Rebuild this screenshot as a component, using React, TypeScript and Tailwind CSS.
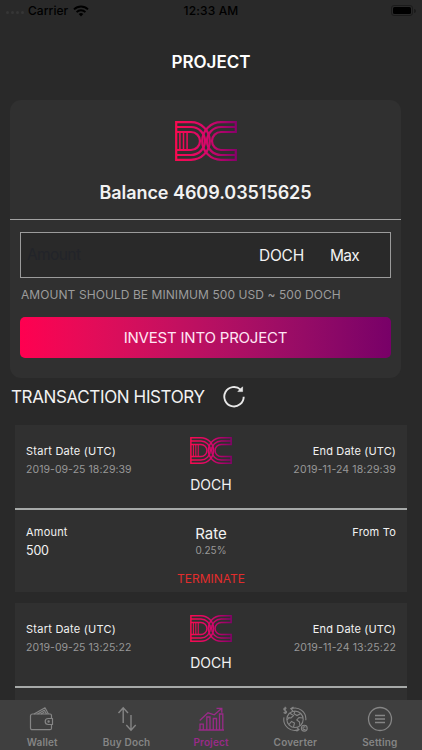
import React from 'react';

interface IHistory {
  id: number;
  start: string;
  end: string;
  amount?: string;
  rate?: string;
}

const HISTORY: IHistory[] = [
  { id: 1, start: '2019-09-25 18:29:39', end: '2019-11-24 18:29:39', amount: '500', rate: '0.25%' },
  { id: 2, start: '2019-09-25 13:25:22', end: '2019-11-24 13:25:22' },
];

interface ILogoProps {
  id: string;
  className: string;
}

const Logo: React.FC<ILogoProps> = ({ id, className }) => (
  <svg viewBox="0 0 62 40" className={className} fill="none" stroke={`url(#${id})`} strokeWidth="2.2">
    <defs>
      <linearGradient id={id} gradientUnits="userSpaceOnUse" x1="0" y1="0" x2="62" y2="0">
        <stop offset="0" stopColor="#fa0a50" />
        <stop offset=".5" stopColor="#d8086a" />
        <stop offset="1" stopColor="#86006a" />
      </linearGradient>
    </defs>
    <path d="M1.2 1.2H16A18.8 18.8 0 0 1 16 38.8H1.2Z" />
    <path d="M1 6H16A14 14 0 0 1 16 34H1" />
    <path d="M1 11H16A9 9 0 0 1 16 29H1" />
    <path d="M4.9 11V29M8.5 11V29M12.1 11V29" strokeWidth="1.5" />
    <path d="M60.8 1.2H46A18.8 18.8 0 0 0 46 38.8H60.8V29H46A9 9 0 0 1 46 11H60.8Z" />
    <path d="M61 6H46A14 14 0 0 0 46 34H61" />
  </svg>
);

const StatusBar: React.FC = () => (
  <div className="flex h-5 shrink-0 items-center justify-between pl-[6px] pr-[6px] pt-px text-[12px] font-medium text-black">
    <div className="flex w-32 items-center">
      <div className="mr-1 mt-1 flex gap-[2px]">
        <span className="size-[3px] rounded-full bg-[#363636]" />
        <span className="size-[3px] rounded-full bg-[#363636]" />
        <span className="size-[3px] rounded-full bg-[#363636]" />
        <span className="size-[3px] rounded-full bg-[#363636]" />
      </div>
      <span className="tracking-[0.05px]">Carrier</span>
      <svg viewBox="0 0 16 12" className="ml-[5px] h-3 w-4" fill="none" stroke="#000" strokeWidth="2">
        <path d="M1 4.4a10 10 0 0 1 14 0M3.6 7.1a6.3 6.3 0 0 1 8.8 0" />
        <path d="M5.7 9.1a3.3 3.3 0 0 1 4.6 0L8 11.5Z" fill="#000" stroke="none" />
      </svg>
    </div>
    <span className="tracking-[0.15px]">12:33 AM</span>
    <div className="flex w-32 items-center justify-end gap-px">
      <div className="h-[11px] w-[22px] rounded-[3px] border border-[#1b1b1b] p-px">
        <div className="h-full rounded-[1.5px] bg-black" />
      </div>
      <span className="h-1 w-[1.5px] rounded-r bg-[#1b1b1b]" />
    </div>
  </div>
);

const InvestCard: React.FC = () => (
  <section className="ml-[10px] mt-[26px] h-[278px] w-[391px] shrink-0 rounded-[11px] bg-[#303030]">
    <div className="flex h-[120px] flex-col items-center border-b border-[#a2a2a2] pt-[21px]">
      <Logo id="logo-main" className="h-10 w-[62px]" />
      <p className="mt-[18px] text-[18px] leading-7 font-semibold tracking-[-0.05px]">Balance 4609.03515625</p>
    </div>
    <div className="px-[10px] pt-3">
      <div className="flex h-[46px] items-center border border-[#9b9b9b] bg-[#292929] pl-[6px] pr-[31px] text-[15.5px]">
        <span className="flex-1 tracking-[-0.6px] text-[#222429]">Amount</span>
        <span className="mr-[26px] pt-px tracking-[-0.25px]">DOCH</span>
        <span className="pt-px tracking-[-0.7px]">Max</span>
      </div>
      <p className="ml-px mt-[7px] text-[12px] leading-5 tracking-[0.07px] text-[#9c9c9c]">
        AMOUNT SHOULD BE MINIMUM 500 USD ~ 500 DOCH
      </p>
      <button
        type="button"
        className="mt-3 h-[41px] w-full rounded-[5px] bg-linear-to-r from-[#ff0050] to-[#780068] pt-px text-[15px] tracking-[-0.2px] text-[#ffe6f4]"
      >
        INVEST INTO PROJECT
      </button>
    </div>
  </section>
);

const HistoryCard: React.FC<{ item: IHistory }> = ({ item }) => (
  <article className="h-[167px] w-[392px] shrink-0 bg-[#303030] text-[11px]">
    <div className="grid h-[85px] grid-cols-3 border-b-2 border-[#a6a9a8] px-[11px]">
      <div className="pt-[17px] whitespace-nowrap">
        <p className="leading-[18px] tracking-[0.25px]">Start Date (UTC)</p>
        <p className="text-[10.5px] leading-[19px] tracking-[0.05px] text-[#989898]">{item.start}</p>
      </div>
      <div className="flex flex-col items-center pt-3">
        <Logo id={`logo-${item.id}`} className="h-[27px] w-[42px]" />
        <p className="mt-[11px] text-[14px] leading-5">DOCH</p>
      </div>
      <div className="flex flex-col items-end pt-[17px] whitespace-nowrap">
        <p className="leading-[18px] tracking-[0.15px]">End Date (UTC)</p>
        <p className="text-[10.5px] leading-[19px] tracking-[0.12px] text-[#989898]">{item.end}</p>
      </div>
    </div>
    {item.amount && (
      <div className="grid grid-cols-3 px-[11px]">
        <div className="pt-[13px]">
          <p className="leading-[18px] tracking-[0.2px]">Amount</p>
          <p className="text-[12.5px] leading-5 tracking-[-0.2px]">{item.amount}</p>
        </div>
        <div className="flex flex-col items-center pt-[14px]">
          <p className="text-[15px] leading-5">Rate</p>
          <p className="text-[10px] leading-3 text-[#989898]">{item.rate}</p>
          <p className="mt-[15px] text-[12px] leading-4 text-[#e22d2d]">TERMINATE</p>
        </div>
        <p className="pt-[13px] text-right leading-[18px] tracking-[0.2px]">From To</p>
      </div>
    )}
  </article>
);

const WalletIcon: React.FC = () => (
  <svg viewBox="0 0 26 26" className="size-[26px]" fill="none" stroke="currentColor" strokeWidth="1.2" strokeLinejoin="round">
    <path d="M22.5 12.5V9.5a1.5 1.5 0 0 0-1.5-1.5H3.5A2 2 0 0 0 1.5 10V22a1.7 1.7 0 0 0 1.7 1.7H21a1.5 1.5 0 0 0 1.5-1.5V18.5" />
    <path d="M19.2 12.5H23.5V18.5H19.2A3 3 0 0 1 19.2 12.5Z" />
    <circle cx="19.6" cy="15.5" r=".6" />
    <path d="M5 8 16 1.8 19.4 8M8.5 8l6.8-3.8L17.5 8M12 8l3.2-1.7" />
  </svg>
);

const SwapIcon: React.FC = () => (
  <svg viewBox="0 0 26 26" className="size-[26px]" fill="none" stroke="currentColor" strokeWidth="1.4">
    <path d="M9.2 17V2M4.5 7 9.2 1.8 14 7M17 9V24M12.3 19 17 24.1 21.7 19" />
  </svg>
);

const ProjectIcon: React.FC = () => (
  <svg viewBox="0 0 26 26" className="size-[26px]" fill="none" stroke="currentColor" strokeWidth="1.3">
    <path d="M.5 24H26M2 24V18.2H5.3V24M8.8 24V11H12V24M15.3 24V12.5H18.5V24M21.5 24V8H24.8V24" />
    <path d="M1.7 14.5 10 6.8 16.3 8.8 23 3M18.5 2.3H23.8V6.8" />
  </svg>
);

const ConverterIcon: React.FC = () => (
  <svg viewBox="0 0 26 26" className="size-[26px]" fill="none" stroke="currentColor" strokeWidth="1.1">
    <circle cx="13" cy="13.3" r="8.2" />
    <path d="M8 7.2 11.5 9.5 9 12 6.8 11.6 5.2 14M13 5.2 12 7.8 15 9.5 18.8 7.5M20.8 12 17 11.5 14.8 14 17.5 16 17.8 19.5M7 18.5 9.5 15.5 12.5 17 11.5 21" />
    <path d="M9.2 2.7A11 11 0 0 1 23.8 14.2M11.5 1 8.8 2.7 11 5M16.8 23.6A11 11 0 0 1 2 11.3M14.7 21.3 17 23.6 14.5 25.3" />
    <path d="M4.5 2.5C3.6 1.5 1.8 1.9 1.8 3.2S4.6 4.5 4.6 6 2.5 7.5 1.6 6.4M3.2.8V8" />
    <circle cx="22.3" cy="22.2" r="2.9" />
    <path d="M23.4 21.3a1.4 1.4 0 1 0 0 1.8" />
  </svg>
);

const SettingIcon: React.FC = () => (
  <svg viewBox="0 0 26 26" className="size-[26px]" fill="none" stroke="currentColor" strokeWidth="1.3">
    <circle cx="13" cy="13" r="11.5" />
    <path d="M8 9.5H18M8 13H18M8 16.5H18" />
  </svg>
);

const TABS = [
  { label: 'Wallet', Icon: WalletIcon },
  { label: 'Buy Doch', Icon: SwapIcon },
  { label: 'Project', Icon: ProjectIcon },
  { label: 'Coverter', Icon: ConverterIcon },
  { label: 'Setting', Icon: SettingIcon },
];

const TabBar: React.FC = () => (
  <nav className="grid h-[50px] shrink-0 grid-cols-5 bg-[#3f3f3f]">
    {TABS.map(({ label, Icon }) => (
      <div
        key={label}
        className={`flex flex-col items-center pt-[6px] ${label === 'Project' ? 'text-[#992b88]' : 'text-[#858585]'}`}
      >
        <Icon />
        <span className="mt-[3px] text-[10px] leading-[14px] font-semibold tracking-[0.15px] whitespace-nowrap">{label}</span>
      </div>
    ))}
  </nav>
);

const App: React.FC = () => {
  return (
    <div className="flex h-[750px] w-[422px] flex-col overflow-hidden bg-[#292929] font-['Inter',sans-serif] text-[#f2f2f2]">
      <StatusBar />
      <h1 className="mt-[31px] h-[23px] text-center text-[17px] leading-[23px] font-semibold text-white">PROJECT</h1>
      <InvestCard />
      <div className="ml-[11px] flex h-[37px] shrink-0 items-center">
        <h2 className="w-[194px] pt-[2px] text-[17px] tracking-[-0.37px] whitespace-nowrap">TRANSACTION HISTORY</h2>
        <svg viewBox="0 0 24 24" className="ml-[17px] size-6" fill="none" stroke="#e8e8e8" strokeWidth="1.9">
          <path d="M18.6 4.6A9.7 9.7 0 1 0 21.7 11.7" />
          <path d="M20.6 1.8V6.6H15.8Z" fill="#e8e8e8" strokeWidth=".6" />
        </svg>
      </div>
      <div className="ml-[15px] flex min-h-0 flex-1 flex-col gap-[11px] overflow-hidden pt-[10px]">
        {HISTORY.map(item => (
          <HistoryCard key={item.id} item={item} />
        ))}
      </div>
      <TabBar />
    </div>
  );
};

export default App;
